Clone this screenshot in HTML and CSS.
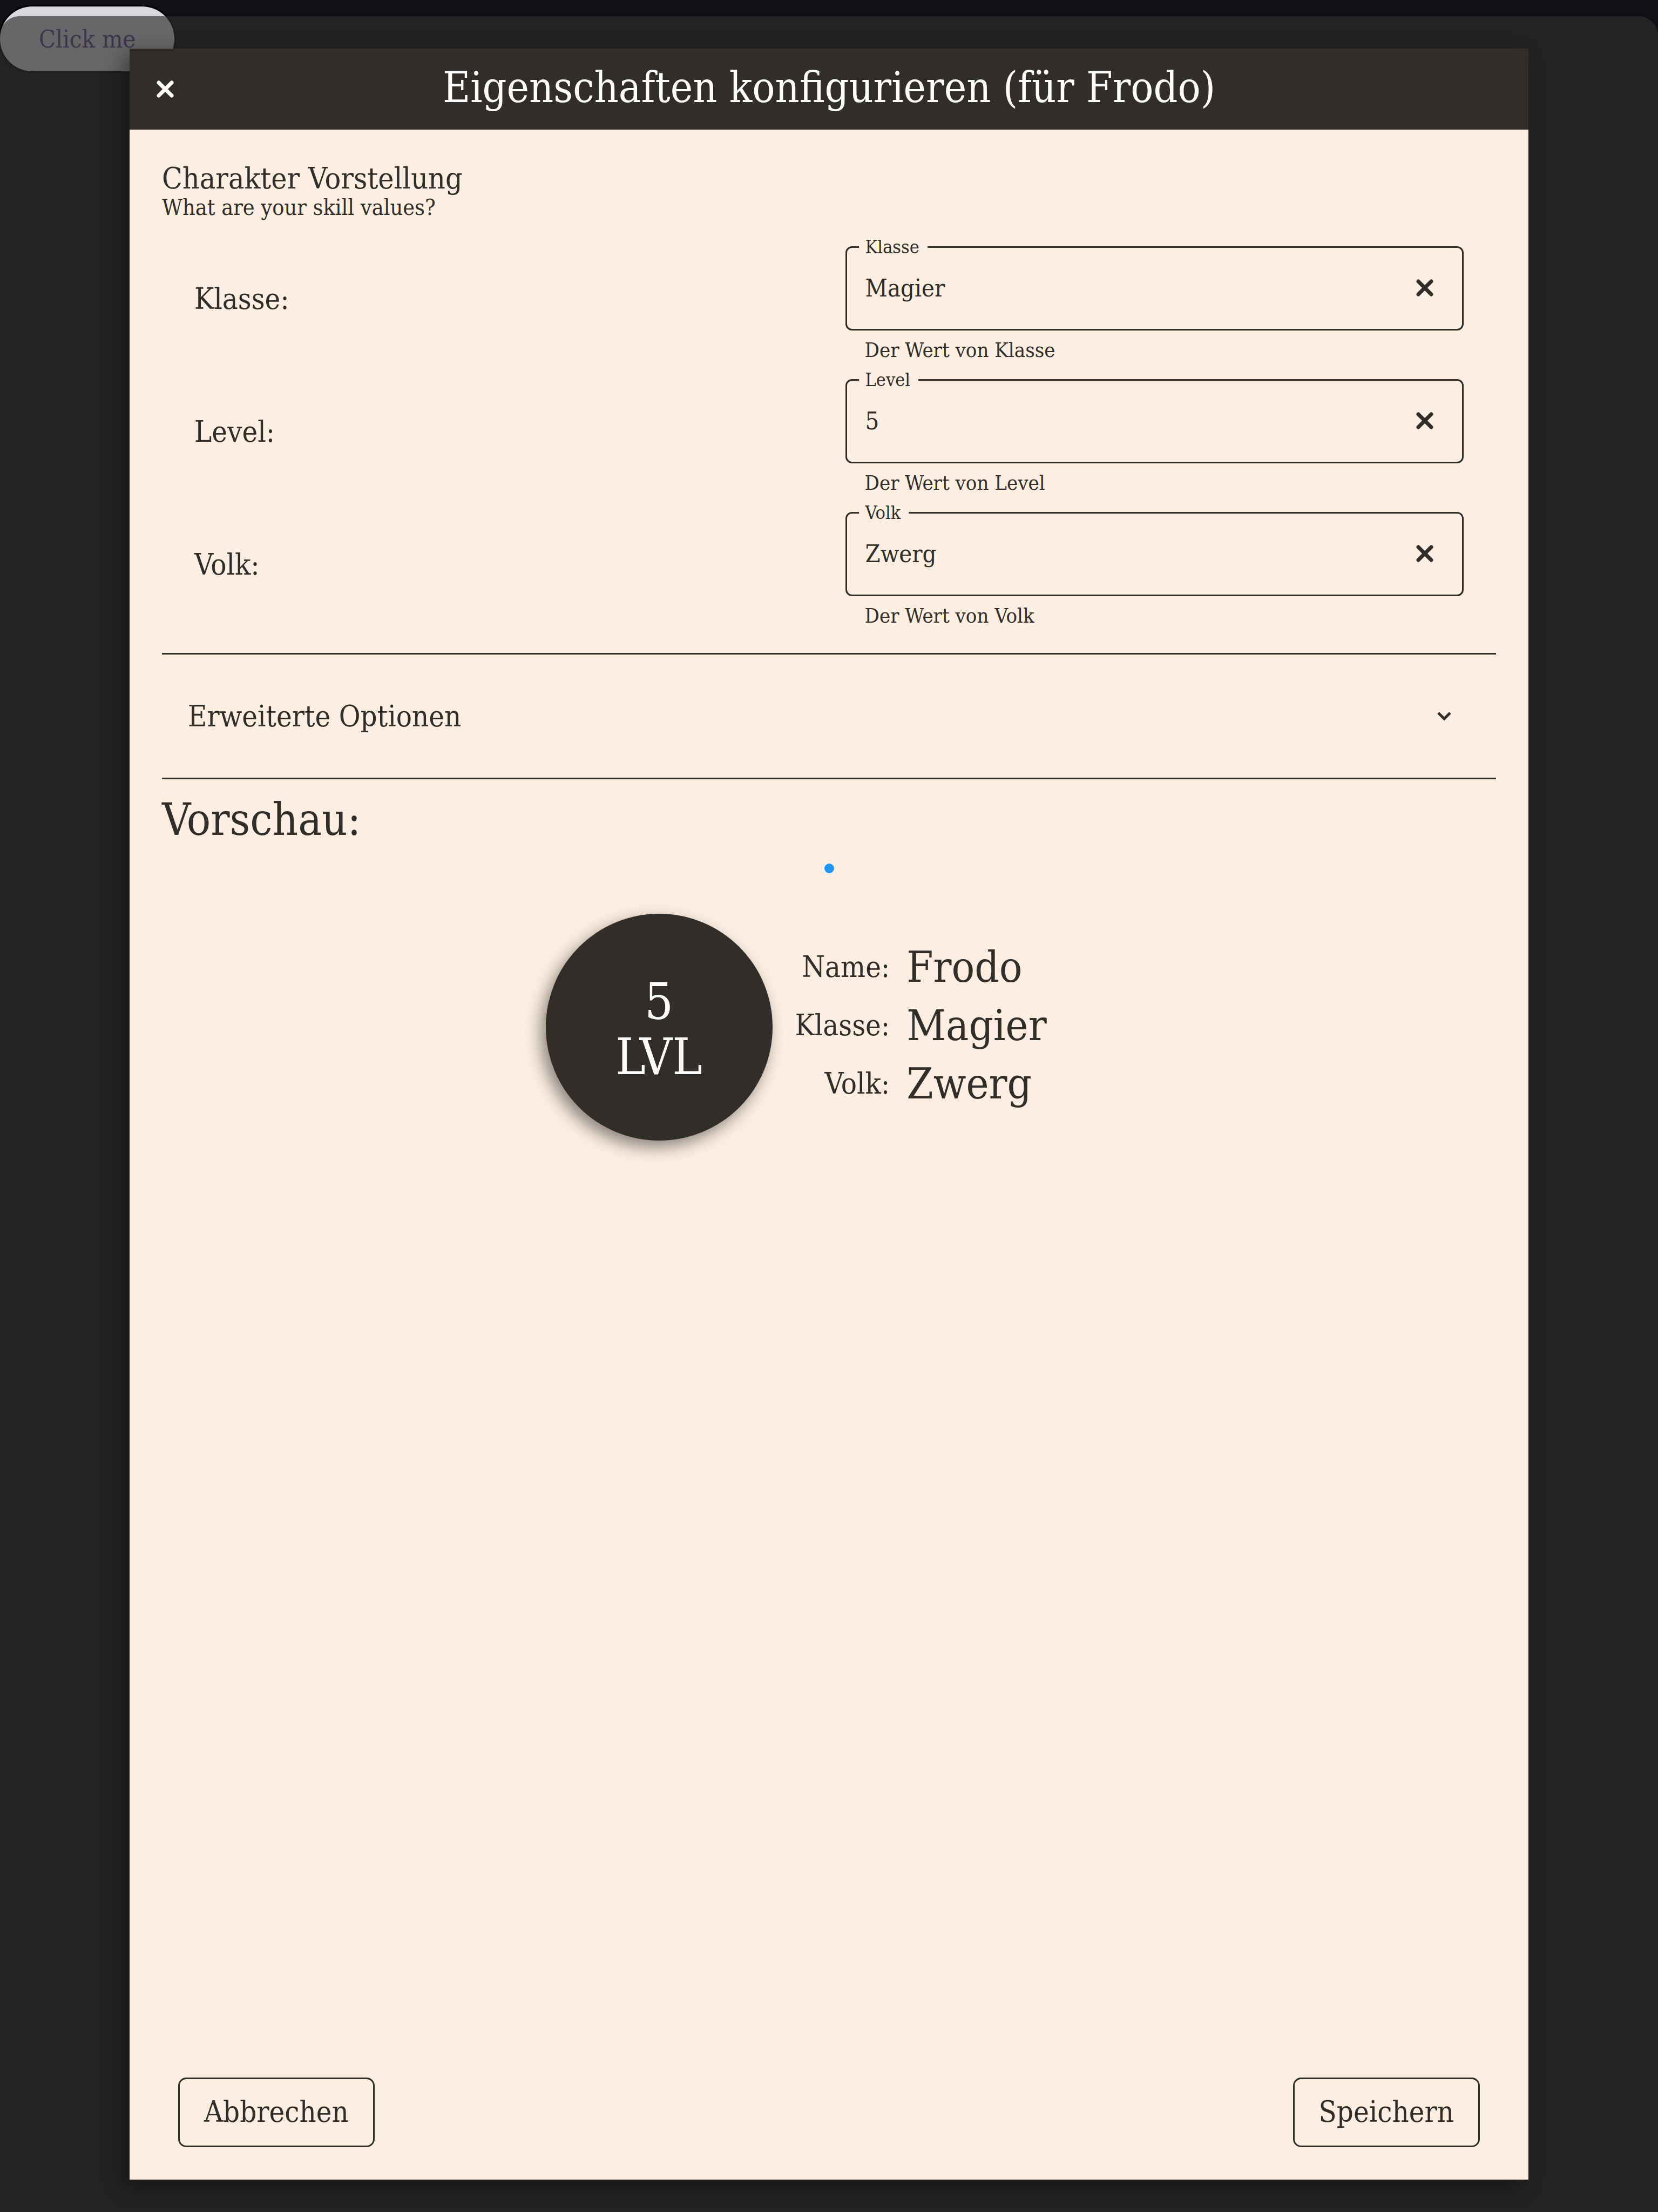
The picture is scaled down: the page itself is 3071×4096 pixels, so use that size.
FILE: index.html
```html
<!DOCTYPE html>
<html lang="de">
<head>
  <meta charset="utf-8">
  <title>Eigenschaften konfigurieren</title>
  <link rel="stylesheet" href="styles.css">
</head>
<body>
  <svg width="0" height="0" class="symbols" aria-hidden="true">
    <symbol id="icon-close" viewBox="0 0 48 48">
      <path d="M12 12L36 36M36 12L12 36" fill="none" stroke="currentColor" stroke-width="7" stroke-linecap="round"/>
    </symbol>
    <symbol id="icon-chevron" viewBox="0 0 48 48">
      <path d="M13 18L24 29L35 18" fill="none" stroke="currentColor" stroke-width="5"/>
    </symbol>
  </svg>

  <button class="open-button" type="button">Click me</button>

  <div class="overlay">
    <main class="dialog" role="dialog" aria-labelledby="dialog-title">
      <header class="dialog-header">
        <button class="icon-button" type="button" aria-label="Schließen"><svg class="icon"><use href="#icon-close"/></svg></button>
        <h1 class="dialog-title" id="dialog-title">Eigenschaften konfigurieren (für Frodo)</h1>
      </header>

      <div class="dialog-body">
        <h2 class="section-title">Charakter Vorstellung</h2>
        <p class="section-hint">What are your skill values?</p>

        <div class="stats">
          <div class="stat">
            <span class="stat-name">Klasse:</span>
            <div class="field">
              <div class="field-box">
                <label class="field-label" for="klasse">Klasse</label>
                <input class="field-input" id="klasse" type="text" value="Magier">
                <button class="icon-button" type="button" aria-label="Klasse leeren"><svg class="icon"><use href="#icon-close"/></svg></button>
              </div>
              <p class="field-help">Der Wert von Klasse</p>
            </div>
          </div>
          <div class="stat">
            <span class="stat-name">Level:</span>
            <div class="field">
              <div class="field-box">
                <label class="field-label" for="level">Level</label>
                <input class="field-input" id="level" type="text" value="5">
                <button class="icon-button" type="button" aria-label="Level leeren"><svg class="icon"><use href="#icon-close"/></svg></button>
              </div>
              <p class="field-help">Der Wert von Level</p>
            </div>
          </div>
          <div class="stat">
            <span class="stat-name">Volk:</span>
            <div class="field">
              <div class="field-box">
                <label class="field-label" for="volk">Volk</label>
                <input class="field-input" id="volk" type="text" value="Zwerg">
                <button class="icon-button" type="button" aria-label="Volk leeren"><svg class="icon"><use href="#icon-close"/></svg></button>
              </div>
              <p class="field-help">Der Wert von Volk</p>
            </div>
          </div>
        </div>

        <button class="expander" type="button" aria-expanded="false">
          <span>Erweiterte Optionen</span>
          <svg class="icon"><use href="#icon-chevron"/></svg>
        </button>

        <h2 class="preview-title">Vorschau:</h2>
        <span class="page-dot"></span>
        <div class="preview">
          <div class="level-badge"><span>5</span><span>LVL</span></div>
          <dl class="facts">
            <dt class="fact-name">Name:</dt><dd class="fact-value">Frodo</dd>
            <dt class="fact-name">Klasse:</dt><dd class="fact-value">Magier</dd>
            <dt class="fact-name">Volk:</dt><dd class="fact-value">Zwerg</dd>
          </dl>
        </div>

        <footer class="actions">
          <button class="action" type="button">Abbrechen</button>
          <button class="action" type="button">Speichern</button>
        </footer>
      </div>
    </main>
  </div>
</body>
</html>
```
FILE: styles.css
```css
:root {
  --ink: #312d28;
  --paper: #fdeee1;
}

* {
  box-sizing: border-box;
  margin: 0;
}

body {
  min-height: 100vh;
  padding-top: 12px;
  background: #121014;
  color: var(--ink);
  font-family: "DejaVu Serif Condensed", "DejaVu Serif", serif;
}

button,
input {
  padding: 0;
  border: 0;
  background: none;
  color: inherit;
  font-family: inherit;
}

.symbols {
  position: absolute;
}

.icon {
  display: block;
  width: 48px;
  height: 48px;
}

.icon-button {
  flex: none;
  width: 48px;
  height: 48px;
}

.open-button {
  display: block;
  height: 120px;
  padding: 0 72px;
  border-radius: 60px;
  background: #dbd7de;
  box-shadow: 0 0 0 3px #000;
  color: #5a4a84;
  font-size: 45px;
}

/* Sheet that dims the page behind the dialog */
.overlay {
  position: absolute;
  top: 30px;
  left: 0;
  right: 0;
  display: flex;
  min-height: calc(100vh - 30px);
  padding: 60px 240px;
  border-radius: 36px 36px 0 0;
  background: rgba(45, 45, 45, 0.667);
}

.dialog {
  display: flex;
  flex: 1;
  flex-direction: column;
  background: var(--paper);
  box-shadow: -12px 12px 36px rgba(0, 0, 0, 0.4);
}

.dialog-header {
  display: grid;
  grid-template-columns: 48px 1fr 48px;
  align-items: center;
  height: 150px;
  padding: 0 42px;
  background: var(--ink);
  color: #fff;
}

.dialog-title {
  padding-bottom: 6px;
  font-size: 78px;
  font-weight: 400;
  line-height: 96px;
  text-align: center;
}

.dialog-body {
  display: flex;
  flex: 1;
  flex-direction: column;
  padding: 60px;
}

.section-title {
  font-size: 55px;
  font-weight: 400;
  line-height: 60px;
}

.section-hint {
  font-size: 41px;
  line-height: 48px;
}

.stats {
  display: flex;
  flex-direction: column;
  gap: 30px;
  padding: 48px 60px 45px;
}

.stat {
  display: grid;
  grid-template-columns: 1fr 1fr;
  gap: 60px;
}

.stat-name {
  font-size: 54px;
  line-height: 196px;
}

.field-box {
  position: relative;
  display: flex;
  align-items: center;
  height: 156px;
  padding: 0 45px 2px 34px;
  border: 3px solid var(--ink);
  border-radius: 12px;
}

.field-label {
  position: absolute;
  top: -20px;
  left: 22px;
  padding: 0 15px 0 12px;
  background: var(--paper);
  font-size: 34px;
  line-height: 36px;
}

.field-input {
  flex: 1;
  min-width: 0;
  height: 72px;
  font-size: 45px;
}

.field-help {
  padding: 12px 36px 0;
  font-size: 38px;
  line-height: 48px;
}

.expander {
  display: flex;
  align-items: center;
  justify-content: space-between;
  height: 234px;
  padding: 0 72px 0 48px;
  border-top: 3px solid var(--ink);
  border-bottom: 3px solid var(--ink);
  font-size: 54px;
}

.preview-title {
  padding-top: 15px;
  font-size: 82px;
  font-weight: 400;
  line-height: 120px;
}

.page-dot {
  align-self: center;
  width: 18px;
  height: 18px;
  margin: 21px 0 75px;
  border-radius: 50%;
  background: #2196f3;
}

.preview {
  display: flex;
  align-self: center;
  align-items: center;
  gap: 42px;
  width: 1050px;
}

.level-badge {
  display: flex;
  flex: none;
  flex-direction: column;
  align-items: center;
  justify-content: center;
  width: 420px;
  height: 420px;
  padding-top: 8px;
  border-radius: 50%;
  background: var(--ink);
  box-shadow: -9px 12px 30px rgba(0, 0, 0, 0.45);
  color: #fff;
  font-size: 93px;
  line-height: 102px;
}

.facts {
  display: grid;
  grid-template-columns: max-content max-content;
  column-gap: 31px;
  align-items: center;
  padding-bottom: 6px;
  line-height: 108px;
}

.fact-name {
  font-size: 54px;
  text-align: right;
}

.fact-value {
  font-size: 79px;
}

.actions {
  display: flex;
  justify-content: space-between;
  margin-top: auto;
  padding: 0 30px;
}

.action {
  height: 129px;
  padding: 0 45px 3px;
  border: 3px solid var(--ink);
  border-radius: 15px;
  font-size: 54px;
}
```
